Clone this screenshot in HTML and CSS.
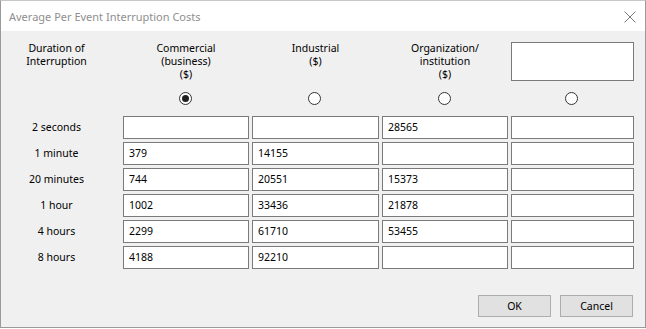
FILE: index.html
```html
<!DOCTYPE html>
<html lang="en">
<head>
  <meta charset="UTF-8" />
  <title>Average Per Event Interruption Costs</title>
  <link rel="stylesheet" href="styles.css">
</head>
<body>
  <div class="dialog">
    <div class="titlebar">
      <span class="title">Average Per Event Interruption Costs</span>
      <svg class="close" width="12" height="12" viewBox="0 0 12 12">
        <path d="M0.5 0.5 L11.5 11.5 M11.5 0.5 L0.5 11.5" stroke="#7a7a7a" stroke-width="1" fill="none" />
      </svg>
    </div>

    <div class="content">
      <div class="grid">
        <div class="head label">Duration of<br>Interruption</div>
        <div class="head">Commercial<br>(business)<br>($)</div>
        <div class="head">Industrial<br>($)</div>
        <div class="head">Organization/<br>institution<br>($)</div>
        <div class="head"><div class="field custom"></div></div>

        <div></div>
        <div class="radio-cell"><span class="radio checked"></span></div>
        <div class="radio-cell"><span class="radio"></span></div>
        <div class="radio-cell"><span class="radio"></span></div>
        <div class="radio-cell"><span class="radio"></span></div>

        <div class="label">2 seconds</div>
        <div class="field"></div>
        <div class="field"></div>
        <div class="field">28565</div>
        <div class="field"></div>

        <div class="label">1 minute</div>
        <div class="field">379</div>
        <div class="field">14155</div>
        <div class="field"></div>
        <div class="field"></div>

        <div class="label">20 minutes</div>
        <div class="field">744</div>
        <div class="field">20551</div>
        <div class="field">15373</div>
        <div class="field"></div>

        <div class="label">1 hour</div>
        <div class="field">1002</div>
        <div class="field">33436</div>
        <div class="field">21878</div>
        <div class="field"></div>

        <div class="label">4 hours</div>
        <div class="field">2299</div>
        <div class="field">61710</div>
        <div class="field">53455</div>
        <div class="field"></div>

        <div class="label">8 hours</div>
        <div class="field">4188</div>
        <div class="field">92210</div>
        <div class="field"></div>
        <div class="field"></div>
      </div>

      <div class="buttons">
        <button class="btn">OK</button>
        <button class="btn">Cancel</button>
      </div>
    </div>
  </div>
</body>
</html>
```

FILE: styles.css
```css
body {
  margin: 0;
  background: #ffffff;
  font-family: "Noto Sans", "Open Sans", sans-serif;
  font-size: 10.5px;
  color: #000;
}
.dialog {
  width: 646px;
  height: 328px;
  box-sizing: border-box;
  border: 1px solid #9a9a9a;
  border-top-color: #c8c8c8;
  display: flex;
  flex-direction: column;
}
.titlebar {
  height: 30px;
  background: #ffffff;
  display: flex;
  align-items: center;
  justify-content: space-between;
  padding: 0 9px 0 8px;
  flex-shrink: 0;
}
.title {
  font-size: 11px;
  color: #8f8f8f;
}
.close {
  display: block;
  margin-top: 1px;
}
.content {
  flex: 1;
  background: #f0f0f0;
  padding: 11px 11px 0 7px;
  display: flex;
  flex-direction: column;
}
.grid {
  display: grid;
  grid-template-columns: 112px 126px 127px 126px 123px;
  grid-template-rows: 39px 29px repeat(6, 23px);
  column-gap: 3px;
  row-gap: 3px;
}
.head {
  text-align: center;
  line-height: 13px;
}
.label {
  text-align: center;
  padding-right: 15px;
  line-height: 22px;
}
.head.label {
  line-height: 13px;
}
.field {
  background: #ffffff;
  border: 1px solid #7a7a7a;
  box-sizing: border-box;
  height: 23px;
  line-height: 20px;
  padding-left: 5px;
  text-align: left;
}
.field.custom {
  height: 39px;
}
.radio-cell {
  display: flex;
  align-items: center;
  justify-content: center;
}
.radio {
  width: 13px;
  height: 13px;
  box-sizing: border-box;
  border: 1px solid #333333;
  border-radius: 50%;
  background: #ffffff;
  display: flex;
  align-items: center;
  justify-content: center;
  margin-right: 2px;
}
.radio.checked::after {
  content: "";
  width: 7px;
  height: 7px;
  border-radius: 50%;
  background: #1f1f1f;
}
.buttons {
  display: flex;
  justify-content: flex-end;
  gap: 9px;
  margin-top: 26px;
  padding-right: 1px;
}
.btn {
  width: 73px;
  height: 22px;
  background: #e1e1e1;
  border: 1px solid #adadad;
  font-family: "Noto Sans", "Open Sans", sans-serif;
  font-size: 10.5px;
  color: #000;
  padding: 0;
}
```
